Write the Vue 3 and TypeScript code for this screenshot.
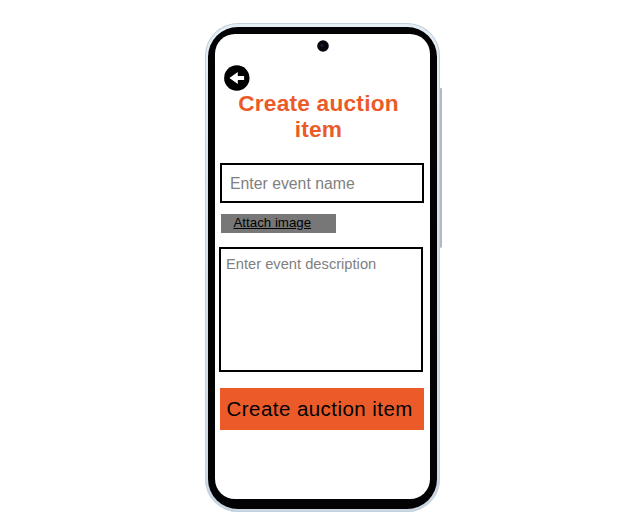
<script setup lang="ts">
import { ref } from 'vue'

const eventName = ref<string>('')
const description = ref<string>('')
</script>

<template>
  <main class="stage">
    <div class="phone">
      <span class="side-key"></span>
      <div class="bezel">
        <div class="screen">
          <svg class="camera" viewBox="0 0 12 12" aria-hidden="true">
            <circle cx="6" cy="6" r="5.8" fill="#06060c" />
            <circle cx="5" cy="5.4" r="1.8" fill="#15172b" />
            <circle cx="5" cy="5" r="0.6" fill="#343957" />
          </svg>
          <button class="back" type="button" aria-label="Back">
            <svg viewBox="0 0 26 26">
              <circle cx="12.8" cy="13" r="12.7" fill="#000" />
              <path d="M5.4 13 L13.8 6.9 V10.9 H20.1 V15.1 H13.8 V19.1 Z" fill="#fff" />
            </svg>
          </button>
          <h1 class="title">Create auction item</h1>
          <input v-model="eventName" class="name" type="text" placeholder="Enter event name" />
          <a class="attach">Attach image</a>
          <textarea v-model="description" class="description" placeholder="Enter event description"></textarea>
          <button class="submit" type="button">Create auction item</button>
        </div>
      </div>
    </div>
  </main>
</template>

<style>
body {
  background: #fff;
}
</style>

<style scoped>
* {
  box-sizing: border-box;
}
.stage {
  height: 520px;
  padding: 23px 0 0 205px;
  overflow: hidden;
  font-family: "Liberation Sans", Arial, sans-serif;
}
.phone {
  position: relative;
  width: 235px;
  height: 489px;
  padding: 3.5px 3px 3.5px 3px;
  border-radius: 33px;
  background: linear-gradient(#e6eff5, #d6e1eb 45%, #ccd8e4);
  box-shadow: inset 0 0 0 1px #c3cfda;
}
.side-key {
  position: absolute;
  left: 235px;
  top: 65px;
  width: 2px;
  height: 160px;
  border-radius: 0 2px 3px 0;
  background: #b0bac5;
}
.bezel {
  height: 482px;
  padding: 7.5px 7px 10px 7px;
  border-radius: 30px;
  background: #030305;
}
.screen {
  position: relative;
  display: flex;
  flex-direction: column;
  align-items: flex-start;
  height: 464.5px;
  padding: 31px 0 0 5px;
  border-radius: 20px;
  background: #fff;
}
.camera {
  position: absolute;
  left: 101.5px;
  top: 5.5px;
  width: 12px;
  height: 12px;
}
.back {
  width: 26px;
  height: 26px;
  margin: 0 0 0 3.5px;
  padding: 0;
  border: 0;
  background: none;
}
.back svg {
  display: block;
  width: 26px;
  height: 26px;
}
.title {
  width: 197px;
  margin: -1px 0 21px 0;
  color: #ea5b29;
  font-size: 22.7px;
  line-height: 26px;
  letter-spacing: 0.22px;
  text-align: center;
}
.name,
.description {
  display: block;
  flex: none;
  width: 204px;
  border: 2px solid #000;
  border-radius: 0;
  outline: 0;
  background: #fff;
  color: #000;
  font-family: inherit;
}
.name {
  height: 40px;
  padding: 1px 8px 0;
  font-size: 15.8px;
}
.description {
  height: 125px;
  margin: 14px 0 16px -1px;
  padding: 7px 5px;
  font-size: 14.7px;
  line-height: 17px;
  resize: none;
}
.name::placeholder,
.description::placeholder {
  color: #808080;
  opacity: 1;
}
.attach {
  width: 115px;
  height: 19px;
  margin: 11px 0 0 1px;
  padding-left: 12.5px;
  background: #777;
  color: #000;
  font-size: 13.3px;
  line-height: 18px;
  text-decoration: underline;
}
.submit {
  width: 204px;
  height: 42px;
  padding: 0 0 0 6.5px;
  border: 0;
  background: #ea5b29;
  color: #000;
  font-family: inherit;
  font-size: 20.5px;
  letter-spacing: 0.45px;
  text-align: left;
  white-space: nowrap;
}
</style>
